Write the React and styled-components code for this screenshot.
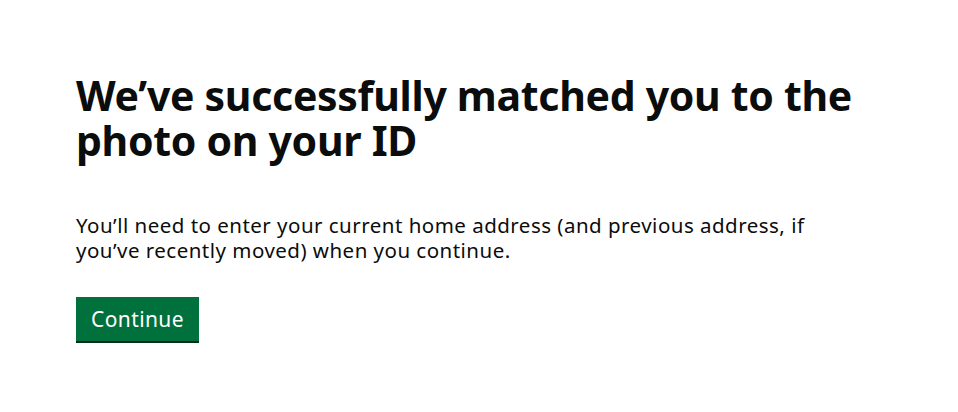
import React from "react";
import styled, { createGlobalStyle } from "styled-components";

const GlobalStyle = createGlobalStyle`
    html, body {
        margin: 0;
        padding: 0;
        background: #ffffff;
    }
    body {
        font-family: "Noto Sans", "Liberation Sans", Arial, sans-serif;
        color: #0b0c0c;
        -webkit-font-smoothing: antialiased;
    }
`;

const Main = styled.main`
    padding: 73px 30px 40px 76px;
`;

const Heading = styled.h1`
    margin: 0 0 50px;
    max-width: 800px;
    font-size: 41px;
    line-height: 45px;
    font-weight: 700;
    letter-spacing: -0.3px;
    color: #0b0c0c;
`;

const Body = styled.p`
    margin: 0 0 34px;
    max-width: 745px;
    font-size: 20.5px;
    line-height: 25px;
    font-weight: 400;
    letter-spacing: 0.48px;
    color: #0b0c0c;
`;

const Button = styled.button`
    display: inline-block;
    margin: 0;
    padding: 8px 13px 7px;
    border: 2px solid transparent;
    border-radius: 0;
    background-color: #00703c;
    box-shadow: 0 2px 0 #002d18;
    color: #ffffff;
    font-family: inherit;
    font-size: 21px;
    line-height: 25px;
    font-weight: 400;
    letter-spacing: 0.4px;
    cursor: pointer;
`;

const App = () => {
    return (
        <>
            <GlobalStyle />
            <Main>
                <Heading>We’ve successfully matched you to the photo on your ID</Heading>
                <Body>
                    You’ll need to enter your current home address (and previous address, if
                    you’ve recently moved) when you continue.
                </Body>
                <Button type="button">Continue</Button>
            </Main>
        </>
    );
};

export default App;
